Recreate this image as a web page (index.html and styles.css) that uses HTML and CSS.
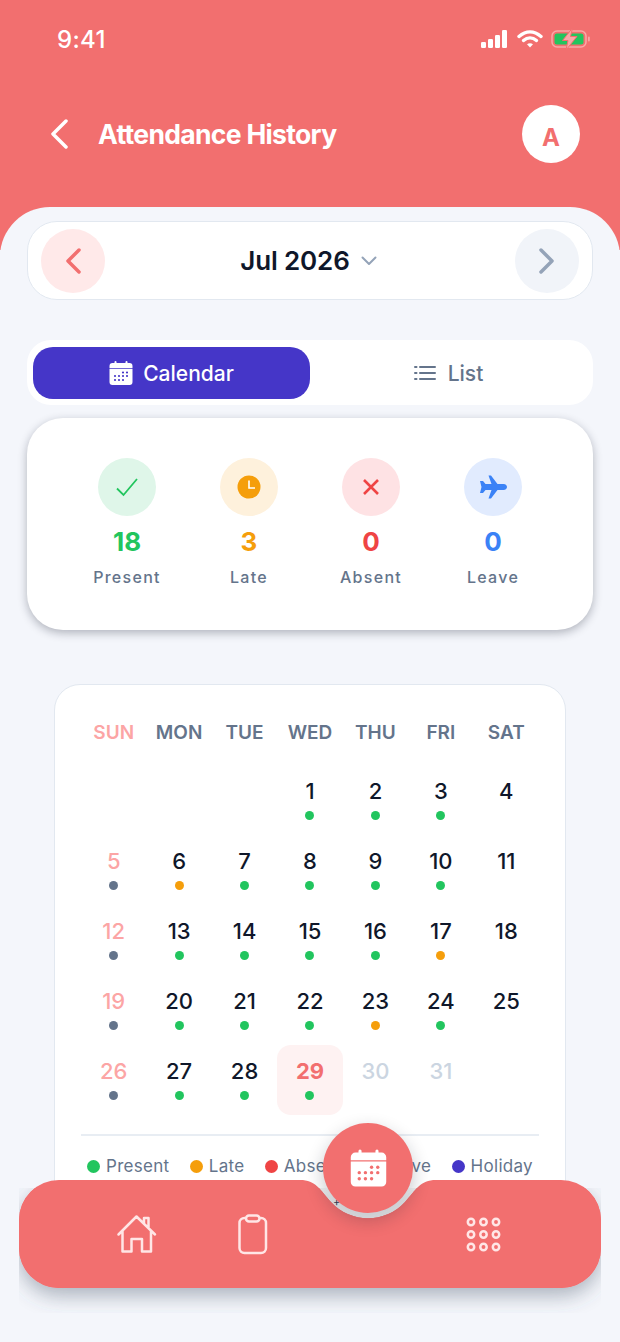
FILE: index.html
```html
<!DOCTYPE html>
<html lang="en">
<head>
<meta charset="utf-8">
<title>Attendance History</title>
<link rel="stylesheet" href="styles.css">
</head>
<body>
<div class="app">
  <header class="header">
    <div class="status">
      <span class="time">9:41</span>
      <div class="status-icons">
        <svg class="ic-signal" width="27" height="18" viewBox="0 0 27 18"><rect x="0" y="12" width="5" height="6" rx="1.2"/><rect x="7" y="9" width="5" height="9" rx="1.2"/><rect x="14" y="5" width="5" height="13" rx="1.2"/><rect x="21" y="0" width="5" height="18" rx="1.2"/></svg>
        <svg class="ic-wifi" width="26" height="18" viewBox="0 0 26 18"><path d="M2 6.5C9 .5 17 .5 24 6.5"/><path d="M6.5 10.5C10.5 7 15.500 7 19.500 10.500"/><path class="wifi-dot" d="M10 14.200 13 17.500 16 14.200C14.200 12.800 11.800 12.800 10 14.200Z"/></svg>
        <svg width="40" height="22" viewBox="0 0 40 22"><rect x="1" y="3" width="34" height="16" rx="5" fill="none" stroke="#f9a8a8" stroke-width="1.500"/><rect x="3.500" y="5.500" width="29" height="11" rx="2.500" fill="#22c55e"/><rect x="37" y="8.500" width="1.800" height="5" rx=".9" fill="#f9a8a8"/><path d="M21.500 0 11.500 12.500H17L15 22 26 8.500H19.500Z" fill="#f9a8a8" stroke="#f26f6f" stroke-width="1"/></svg>
      </div>
    </div>
    <div class="topbar">
      <svg class="back" width="18" height="30" viewBox="0 0 18 30"><path d="M16 2 3 15 16 28"/></svg>
      <h1 class="title">Attendance History</h1>
      <div class="avatar">A</div>
    </div>
  </header>

  <main class="sheet">
    <section class="month-bar">
      <button class="round round-prev"><svg width="18" height="28" viewBox="0 0 18 28"><path d="M15 3 4 14 15 25"/></svg></button>
      <div class="month"><span>Jul 2026</span><svg width="16" height="10" viewBox="0 0 16 10"><path d="M1.500 1.500 8 8 14.500 1.500"/></svg></div>
      <button class="round round-next"><svg width="18" height="28" viewBox="0 0 18 28"><path d="M3 3 14 14 3 25"/></svg></button>
    </section>

    <nav class="tabs">
      <div class="tab tab-active">
        <svg width="24" height="24" viewBox="0 0 24 24"><use href="#cal"/><g fill="#4536c8"><circle cx="14" cy="11.500" r="1.100"/><circle cx="18" cy="11.500" r="1.100"/><circle cx="6" cy="15" r="1.100"/><circle cx="10" cy="15" r="1.100"/><circle cx="14" cy="15" r="1.100"/><circle cx="18" cy="15" r="1.100"/><circle cx="6" cy="19" r="1.100"/><circle cx="10" cy="19" r="1.100"/><circle cx="14" cy="19" r="1.100"/></g></svg>
        <span>Calendar</span>
      </div>
      <div class="tab">
        <svg class="ic-list" width="22" height="16" viewBox="0 0 22 16"><path d="M6 2H21M6 8H21M6 14H21"/><path d="M1 2H2.500M1 8H2.500M1 14H2.500"/></svg>
        <span>List</span>
      </div>
    </nav>

    <section class="stats">
      <div class="stat">
        <div class="stat-icon bg-green"><svg class="ic-check" width="24" height="20" viewBox="0 0 24 20"><path d="M2 11.500 8.500 18 22 2"/></svg></div>
        <div class="stat-num c-green">18</div>
        <div class="stat-label">Present</div>
      </div>
      <div class="stat">
        <div class="stat-icon bg-amber"><svg width="24" height="24" viewBox="0 0 24 24"><circle cx="12" cy="12" r="11.500" fill="#f59e0b"/><path d="M12 5.500V13H18" fill="none" stroke="#fff" stroke-width="1.600"/></svg></div>
        <div class="stat-num c-amber">3</div>
        <div class="stat-label">Late</div>
      </div>
      <div class="stat">
        <div class="stat-icon bg-red"><svg class="ic-x" width="18" height="18" viewBox="0 0 18 18"><path d="M2 2 16 16M16 2 2 16"/></svg></div>
        <div class="stat-num c-red">0</div>
        <div class="stat-label">Absent</div>
      </div>
      <div class="stat">
        <div class="stat-icon bg-blue"><svg width="28" height="24" viewBox="0 0 28 24"><path fill="#3b82f6" d="M9.500 0.500H12L18.500 9H24.500C26.800 9 28 10.500 28 12S26.800 15 24.500 15H18.500L12 23.500H9.500L12.500 15H6.500L4 18H1L2.500 12 1 6H4L6.500 9H12.500Z"/></svg></div>
        <div class="stat-num c-blue">0</div>
        <div class="stat-label">Leave</div>
      </div>
    </section>

    <section class="calendar">
      <div class="grid">
        <div class="wd wd-sun">SUN</div><div class="wd">MON</div><div class="wd">TUE</div><div class="wd">WED</div><div class="wd">THU</div><div class="wd">FRI</div><div class="wd">SAT</div>
        <div class="day"></div><div class="day"></div><div class="day"></div>
        <div class="day"><span>1</span><i class="dot dg"></i></div>
        <div class="day"><span>2</span><i class="dot dg"></i></div>
        <div class="day"><span>3</span><i class="dot dg"></i></div>
        <div class="day"><span>4</span></div>
        <div class="day sun"><span>5</span><i class="dot ds"></i></div>
        <div class="day"><span>6</span><i class="dot da"></i></div>
        <div class="day"><span>7</span><i class="dot dg"></i></div>
        <div class="day"><span>8</span><i class="dot dg"></i></div>
        <div class="day"><span>9</span><i class="dot dg"></i></div>
        <div class="day"><span>10</span><i class="dot dg"></i></div>
        <div class="day"><span>11</span></div>
        <div class="day sun"><span>12</span><i class="dot ds"></i></div>
        <div class="day"><span>13</span><i class="dot dg"></i></div>
        <div class="day"><span>14</span><i class="dot dg"></i></div>
        <div class="day"><span>15</span><i class="dot dg"></i></div>
        <div class="day"><span>16</span><i class="dot dg"></i></div>
        <div class="day"><span>17</span><i class="dot da"></i></div>
        <div class="day"><span>18</span></div>
        <div class="day sun"><span>19</span><i class="dot ds"></i></div>
        <div class="day"><span>20</span><i class="dot dg"></i></div>
        <div class="day"><span>21</span><i class="dot dg"></i></div>
        <div class="day"><span>22</span><i class="dot dg"></i></div>
        <div class="day"><span>23</span><i class="dot da"></i></div>
        <div class="day"><span>24</span><i class="dot dg"></i></div>
        <div class="day"><span>25</span></div>
        <div class="day sun"><span>26</span><i class="dot ds"></i></div>
        <div class="day"><span>27</span><i class="dot dg"></i></div>
        <div class="day"><span>28</span><i class="dot dg"></i></div>
        <div class="day today"><span>29</span><i class="dot dg"></i></div>
        <div class="day muted"><span>30</span></div>
        <div class="day muted"><span>31</span></div>
        <div class="day"></div>
      </div>
      <div class="legend">
        <div class="lg"><i class="lg-dot dg"></i>Present</div>
        <div class="lg"><i class="lg-dot da"></i>Late</div>
        <div class="lg"><i class="lg-dot dr"></i>Absent</div>
        <div class="lg"><i class="lg-dot db"></i>Leave</div>
        <div class="lg"><i class="lg-dot di"></i>Holiday</div>
      </div>
      <div class="legend-more">+</div>
    </section>
  </main>

  <svg class="nav" width="620" height="172" viewBox="0 1170 620 172">
    <defs>
      <clipPath id="navclip"><rect x="19" y="1188" width="582" height="125"/></clipPath>
      <filter id="navshadow" x="-10%" y="-30%" width="120%" height="170%"><feDropShadow dx="0" dy="8" stdDeviation="10" flood-color="#475569" flood-opacity=".42"/></filter>
      <path id="navshape" d="M59 1180H300C316 1180 320 1190 331 1202A50 50 0 0 0 405 1202C416 1190 420 1180 436 1180H561A40 40 0 0 1 601 1220V1248A40 40 0 0 1 561 1288H59A40 40 0 0 1 19 1248V1220A40 40 0 0 1 59 1180Z"/>
    </defs>
    <g clip-path="url(#navclip)"><use href="#navshape" fill="#f26f6f" filter="url(#navshadow)"/></g>
    <use href="#navshape" fill="#f26f6f"/>
    <g class="nav-ic">
      <path d="M118.500 1234.500 136.500 1216.500 155 1234.500M122.500 1231V1251.500H131.500V1239H142V1251.500H151V1231M144 1223.500V1218H148.500V1228"/>
      <rect x="239.500" y="1218" width="26.500" height="35" rx="5"/>
      <rect x="246" y="1215.500" width="13.500" height="6" rx="3" class="clip"/>
      <circle cx="471" cy="1222" r="3.200"/><circle cx="483.500" cy="1222" r="3.200"/><circle cx="496" cy="1222" r="3.200"/>
      <circle cx="471" cy="1234.500" r="3.200"/><circle cx="483.500" cy="1234.500" r="3.200"/><circle cx="496" cy="1234.500" r="3.200"/>
      <circle cx="471" cy="1247" r="3.200"/><circle cx="483.500" cy="1247" r="3.200"/><circle cx="496" cy="1247" r="3.200"/>
    </g>
  </svg>

  <button class="fab">
    <svg width="37" height="38" viewBox="0 0 24 24"><use href="#cal"/><g fill="#f26f6f"><circle cx="14" cy="11.500" r="1.100"/><circle cx="18" cy="11.500" r="1.100"/><circle cx="6" cy="15" r="1.100"/><circle cx="10" cy="15" r="1.100"/><circle cx="14" cy="15" r="1.100"/><circle cx="18" cy="15" r="1.100"/><circle cx="6" cy="19" r="1.100"/><circle cx="10" cy="19" r="1.100"/><circle cx="14" cy="19" r="1.100"/></g></svg>
  </button>

  <svg class="defs" width="0" height="0"><defs><g id="cal"><rect x="5.500" y="0" width="2" height="4" rx="1" fill="#fff"/><rect x="16.500" y="0" width="2" height="4" rx="1" fill="#fff"/><path fill="#fff" d="M3.500 2H20.500A3 3 0 0 1 23.500 5V7H.5V5A3 3 0 0 1 3.500 2ZM.5 7.800H23.500V21A3 3 0 0 1 20.500 24H3.500A3 3 0 0 1 .5 21Z"/></g></defs></svg>
</div>
</body>
</html>
```
FILE: styles.css
```css
* { box-sizing: border-box; }
html, body { margin: 0; padding: 0; }
body { font-family: "Inter", "Liberation Sans", sans-serif; background: #f4f6fb; }
button { border: 0; padding: 0; font: inherit; cursor: pointer; }
.app { position: relative; width: 620px; height: 1342px; overflow: hidden; background: #f4f6fb; }

.header { height: 250px; background: #f26f6f; padding: 26px 30px 0 50px; color: #fff; }
.status { display: flex; justify-content: space-between; align-items: center; height: 26px; padding-left: 7px; margin-right: -1px; }
.time { font-size: 24px; font-weight: 500; letter-spacing: .3px; }
.status-icons { display: flex; align-items: center; gap: 8px; }
.ic-signal { fill: #fff; margin-right: 1px; }
.ic-wifi path { fill: none; stroke: #fff; stroke-width: 3.400; stroke-linecap: round; }
.ic-wifi .wifi-dot { fill: #fff; stroke: none; }

.topbar { display: flex; align-items: center; height: 58px; margin-top: 53px; padding-right: 10px; }
.back { fill: none; stroke: #fff; stroke-width: 3.500; stroke-linecap: round; stroke-linejoin: round; margin-right: 30px; }
.title { margin: 0; flex: 1; font-size: 26.500px; line-height: 30px; font-weight: 700; letter-spacing: -.67px; }
.avatar { width: 58px; height: 58px; border-radius: 50%; background: #fff; color: #f26f6f; font-size: 24px; font-weight: 700; display: flex; align-items: center; justify-content: center; padding-top: 6px; }

.sheet { margin-top: -43px; height: 1135px; padding-top: 14px; background: #f4f6fb; border-radius: 50px 50px 0 0; position: relative; overflow: hidden; }

.month-bar { margin: 0 27px; height: 79px; background: #fff; border: 1.500px solid #e2e8f0; border-radius: 30px; display: flex; align-items: center; justify-content: space-between; padding: 0 13px; }
.round { width: 64px; height: 64px; border-radius: 50%; display: flex; align-items: center; justify-content: center; }
.round svg { fill: none; stroke-width: 3.500; stroke-linecap: round; stroke-linejoin: round; }
.round-prev { background: #ffe9e9; stroke: #f26f6f; }
.round-next { background: #f1f4f9; stroke: #94a3b8; }
.month { display: flex; align-items: center; gap: 11px; font-size: 26px; font-weight: 600; letter-spacing: -.15px; color: #0f172a; padding-right: 3px; }
.month svg { fill: none; stroke: #94a3b8; stroke-width: 2; stroke-linecap: round; stroke-linejoin: round; }

.tabs { margin: 40px 27px 0; height: 65px; padding: 7px 6px 6px; background: #fff; border-radius: 24px; display: flex; }
.tab { flex: 1; display: flex; align-items: center; justify-content: center; gap: 12px; border-radius: 20px; font-size: 21px; font-weight: 500; color: #64748b; }
.tab-active { background: #4536c8; color: #fff; gap: 10px; }
.ic-list { fill: none; stroke: #64748b; stroke-width: 2; stroke-linecap: round; }

.stats { margin: 13px 27px 0; height: 212px; padding: 40px 39px 0; background: #fff; border-radius: 36px; box-shadow: 0 3px 10px rgba(15, 23, 42, .3); display: flex; }
.stat { flex: 1; display: flex; flex-direction: column; align-items: center; }
.stat-icon { width: 58px; height: 58px; border-radius: 50%; display: flex; align-items: center; justify-content: center; }
.bg-green { background: #dff6e9; }
.bg-amber { background: #fef1dc; }
.bg-red { background: #fee2e4; }
.bg-blue { background: #e1ebfe; }
.ic-check { fill: none; stroke: #22c55e; stroke-width: 1.800; }
.ic-x { fill: none; stroke: #ef4444; stroke-width: 2.600; }
.stat-num { margin-top: 8px; font-size: 26px; line-height: 36px; font-weight: 700; }
.c-green { color: #22c55e; }
.c-amber { color: #f59e0b; }
.c-red { color: #ef4444; }
.c-blue { color: #3b82f6; }
.stat-label { margin-top: 7px; font-size: 16px; line-height: 20px; font-weight: 500; letter-spacing: 1.300px; color: #64748b; }

.calendar { margin: 53.500px 54px 0; height: 600px; padding: 27px 26px 0; background: #fff; border: 1.500px solid #e2e8f0; border-radius: 26px; }
.grid { display: grid; grid-template-columns: repeat(7, 1fr); grid-auto-rows: 70px; grid-template-rows: 53.500px; }
.wd { text-align: center; font-size: 19px; line-height: 42px; font-weight: 600; color: #64748b; }
.wd-sun { color: #fca5a5; }
.day { display: flex; flex-direction: column; align-items: center; padding-top: 12px; font-size: 22px; line-height: 28px; font-weight: 500; color: #0f172a; border-radius: 14px; }
.dot { width: 9px; height: 9px; border-radius: 50%; margin-top: 6px; }
.dg { background: #22c55e; }
.da { background: #f59e0b; }
.dr { background: #ef4444; }
.db { background: #3b82f6; }
.di { background: #4536c8; }
.ds { background: #64748b; }
.sun { color: #fca5a5; }
.muted { color: #cbd5e1; }
.today { background: #fef2f2; color: #f26f6f; font-weight: 700; }

.legend { margin-top: 19px; padding: 20px 6px 0; border-top: 2px solid #e8edf3; display: flex; justify-content: space-between; }
.lg { display: flex; align-items: center; gap: 6px; font-size: 17px; line-height: 20px; letter-spacing: .3px; color: #64748b; }
.lg-dot { width: 13px; height: 13px; border-radius: 50%; }
.legend-more { margin: 19px 0 0 252px; font-size: 11px; line-height: 14px; color: #334155; }

.nav { position: absolute; left: 0; bottom: 0; }
.nav-ic { fill: none; stroke: #ffe6e6; stroke-width: 2.500; stroke-linecap: round; stroke-linejoin: round; }
.nav-ic .clip { fill: #f26f6f; }
.defs { position: absolute; }
.fab { position: absolute; left: 323px; top: 1123px; width: 90px; height: 90px; border-radius: 50%; background: #f26f6f; box-shadow: 0 7px 18px rgba(15, 23, 42, .24); display: flex; align-items: center; justify-content: center; }
```
